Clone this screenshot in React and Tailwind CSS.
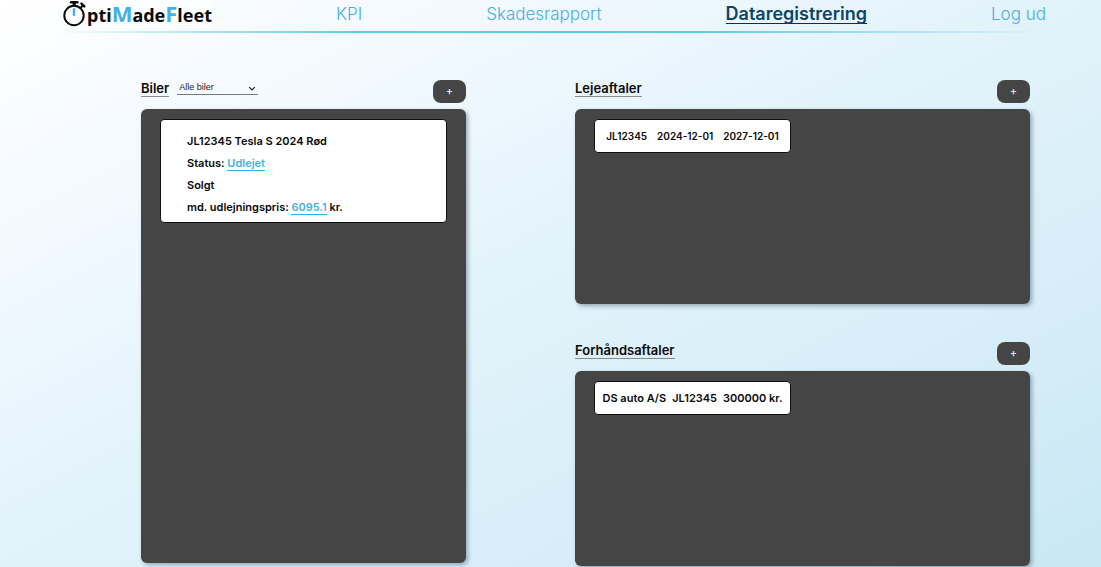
import React from "react";

function Logo() {
  return (
    <a href="#" aria-label="OptiMadeFleet" className="flex h-7 items-center bg-white/60">
      <svg viewBox="0 0 24 28" className="h-7 w-6" fill="none" stroke="#0a0a0a">
        <circle cx="11" cy="15.5" r="9.7" strokeWidth="2" />
        <path d="M8 2.2h6.4" strokeWidth="2.4" strokeLinecap="round" />
        <path d="M11.2 3v3" strokeWidth="3" />
        <path d="M18.4 3.6l3 2.8" strokeWidth="2.4" strokeLinecap="round" />
        <path d="M19.6 5.6l-2 2.4" strokeWidth="2" />
        <path d="M11 9.3v5.4" stroke="#45b0e2" strokeWidth="2.4" strokeLinecap="round" />
      </svg>
      <span className="pt-0.5 font-['Noto_Sans',sans-serif] text-lg leading-7 font-bold text-[#0a0a0a]">
        pti<span className="text-[22px] leading-6 text-[#45b0e2]">M</span>ade
        <span className="text-[22px] leading-6 text-[#45b0e2]">F</span>leet
      </span>
    </a>
  );
}

const links = [
  { label: "KPI" },
  { label: "Skadesrapport" },
  { label: "Dataregistrering", active: true },
  { label: "Log ud" },
];

function Header() {
  return (
    <header className="px-[5%]">
      <nav className="flex h-[31px] items-start justify-between pl-2">
        <Logo />
        {links.map((l) => (
          <a
            key={l.label}
            href="#"
            aria-current={l.active ? "page" : undefined}
            className={
              l.active
                ? "mt-1 border-b border-[#1c2c38] text-lg leading-[19px] font-semibold text-[#0b4568]"
                : "mt-1 text-[17px] leading-5 font-light text-[#45b0e2]"
            }
          >
            {l.label}
          </a>
        ))}
      </nav>
      <div className="h-0.5 bg-[linear-gradient(to_right,transparent,#3dbdea_30%,#3dbdea_65%,transparent)] opacity-80" />
    </header>
  );
}

function Panel({ title, filter, height, children }) {
  return (
    <section>
      <div className="mb-1.5 flex items-start">
        <h2 className="border-b border-[#8a8a8a] text-[13px] leading-4 font-semibold">{title}</h2>
        {filter}
        <button
          type="button"
          aria-label={"Tilføj til " + title}
          className="ml-auto h-[23px] w-[33px] rounded-lg bg-[#454545] text-[11px] leading-[23px] text-white"
        >
          +
        </button>
      </div>
      <div className={"rounded-md bg-[#454545] px-[19px] py-2.5 shadow-[2px_2px_4px_rgba(60,80,95,0.45)] " + height}>
        {children}
      </div>
    </section>
  );
}

function CarFilter() {
  return (
    <div className="relative ml-2">
      <select
        aria-label="Filtrer biler"
        className="block h-[15px] w-[81px] appearance-none border-b border-[#777] bg-transparent pl-0.5 font-['Liberation_Sans',sans-serif] text-[9px] leading-[14px] text-[#222]"
      >
        <option>Alle biler</option>
      </select>
      <svg viewBox="0 0 8 6" className="pointer-events-none absolute top-1.5 right-0.5 h-1.5 w-2" fill="none" stroke="#222" strokeWidth="1.2">
        <path d="M1.2 1.2L4 4l2.8-2.8" />
      </svg>
    </div>
  );
}

function Agreement({ items, size }) {
  return (
    <div className={"flex h-[34px] w-[197px] items-center justify-center rounded-sm border border-[#111] bg-white font-semibold whitespace-nowrap " + size}>
      {items.map((t) => (
        <span key={t}>{t}</span>
      ))}
    </div>
  );
}

function ValueLink({ children }) {
  return (
    <a href="#" className="border-b border-[#27b5e8] text-[#45b0e2]">
      {children}
    </a>
  );
}

export default function App() {
  return (
    <div className="min-h-screen bg-[linear-gradient(to_bottom_right,#ffffff_0%,#f0f8ff_27%,#e2f3fa_48%,#d6edf8_76%,#c8e8f4_100%)] font-['Inter',sans-serif] text-[#0a0a0a]">
      <Header />
      <main className="grid grid-cols-[325fr_455fr] items-start gap-[109px] pt-[47px] pr-[71px] pl-[141px]">
        <Panel title="Biler" filter={<CarFilter />} height="min-h-[454px]">
          <div className="rounded-sm border border-[#111] bg-white pt-2.5 pb-1 pl-[26px] text-[11px] leading-[22px] font-semibold">
            <p>JL12345 Tesla S 2024 Rød</p>
            <p>
              Status: <ValueLink>Udlejet</ValueLink>
            </p>
            <p>Solgt</p>
            <p>
              md. udlejningspris: <ValueLink>6095.1</ValueLink> kr.
            </p>
          </div>
        </Panel>
        <div className="grid gap-[38px]">
          <Panel title="Lejeaftaler" height="min-h-[195px]">
            <Agreement items={["JL12345", "2024-12-01", "2027-12-01"]} size="gap-2.5 text-[10px]" />
          </Panel>
          <Panel title="Forhåndsaftaler" height="min-h-[195px]">
            <Agreement items={["DS auto A/S", "JL12345", "300000 kr."]} size="gap-1.5 text-[11px]" />
          </Panel>
        </div>
      </main>
    </div>
  );
}
